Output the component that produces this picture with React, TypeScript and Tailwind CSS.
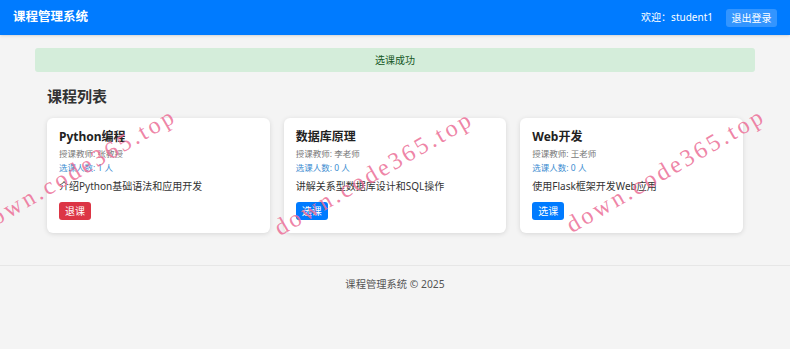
import React from 'react'

type Course = {
  name: string
  teacher: string
  count: number
  desc: string
  enrolled: boolean
}

const courses: Course[] = [
  { name: 'Python编程', teacher: '张教授', count: 1, desc: '介绍Python基础语法和应用开发', enrolled: true },
  { name: '数据库原理', teacher: '李老师', count: 0, desc: '讲解关系型数据库设计和SQL操作', enrolled: false },
  { name: 'Web开发', teacher: '王老师', count: 0, desc: '使用Flask框架开发Web应用', enrolled: false },
]

const font = "font-['Segoe_UI','Noto_Sans','Noto_Sans_CJK_SC',sans-serif]"

const Watermark = ({ left, top }: { left: number; top: number }) => (
  <div
    className="pointer-events-none absolute whitespace-nowrap font-['Liberation_Serif',serif] text-[24px] tracking-[3px] text-[#ec6f97]/85 -rotate-[30deg]"
    style={{ left, top }}
  >
    down.code365.top
  </div>
)

const App = () => {
  return (
    <div className={`relative min-h-screen bg-[#f4f4f4] ${font} overflow-hidden`}>
      {/* Header */}
      <header className="flex h-[35px] items-center justify-between bg-[#007bff] px-[13px] shadow-sm">
        <h1 className="text-[12.5px] font-bold text-white">课程管理系统</h1>
        <div className="flex items-center gap-[13px] text-[10px] text-white">
          <span>欢迎：student1</span>
          <button className="rounded-[3px] bg-white/20 px-[5.5px] py-[2px] text-[10px] leading-[14px] text-white">退出登录</button>
        </div>
      </header>

      {/* Main */}
      <main className="mx-auto max-w-[720px] pt-[13px] pb-[32px]">
        <div className="rounded-[3px] bg-[#d4edda] py-[5px] text-center text-[10px] leading-[14px] text-[#155724]">选课成功</div>

        <div className="px-3">
          <h2 className="mt-[14px] mb-[12px] text-[15px] font-bold leading-[20px] text-[#333]">课程列表</h2>

          <div className="grid grid-cols-3 gap-[14px]">
            {courses.map((c) => (
              <div key={c.name} className="rounded-[6px] bg-white px-[12px] pt-[11px] pb-[13px] shadow-[0_1px_5px_rgba(0,0,0,0.12)]">
                <h3 className="text-[12px] font-bold leading-[16px] text-[#222]">{c.name}</h3>
                <p className="mt-[2px] text-[8.5px] leading-[14px] text-[#777]">授课教师: {c.teacher}</p>
                <p className="text-[8.5px] leading-[14px] text-[#3a8bd0]">选课人数: {c.count} 人</p>
                <p className="mt-[3px] text-[10px] leading-[16px] text-[#333]">{c.desc}</p>
                <button
                  className={`mt-[8px] block h-[18px] rounded-[3px] px-[6px] text-[10px] leading-[18px] text-white ${
                    c.enrolled ? 'bg-[#dc3545]' : 'bg-[#007bff]'
                  }`}
                >
                  {c.enrolled ? '退课' : '选课'}
                </button>
              </div>
            ))}
          </div>
        </div>
      </main>

      {/* Footer */}
      <footer className="border-t border-[#e6e6e6] pt-[11px] text-center text-[10.3px] leading-[14px] text-[#555]">
        课程管理系统 © 2025
      </footer>

      <Watermark left={-36} top={152} />
      <Watermark left={261} top={155} />
      <Watermark left={553} top={152} />
    </div>
  )
}

export default App
